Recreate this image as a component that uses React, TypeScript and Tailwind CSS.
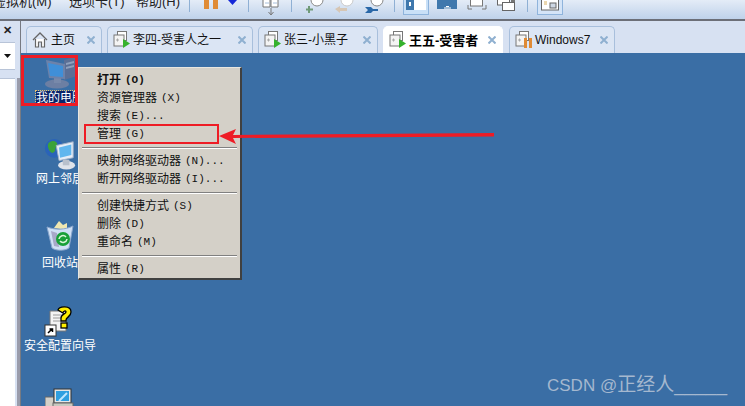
const cjk = "font-['Liberation_Sans','Noto_Sans_CJK_SC',sans-serif]";

function VmIcon({ paused }: { paused?: boolean }) {
  return (
    <svg width="18" height="18" viewBox="0 0 18 18" className="shrink-0">
      <rect x="4.500" y="0.500" width="9" height="9" fill="#fff" stroke="#777" />
      <rect x="1" y="4" width="10" height="11" fill="#f4f4f4" stroke="#777" strokeWidth="1" />
      <path d="M3 9h3M4.500 7.500v3" stroke="#a9a9a9" />
      {paused ? (
        <>
          <rect x="9" y="7" width="3" height="10" fill="#e08b35" />
          <rect x="14" y="7" width="3" height="10" fill="#e08b35" />
        </>
      ) : (
        <path d="M10 8l7 4.500-7 4.500z" fill="#35b22c" />
      )}
    </svg>
  );
}

function HomeIcon() {
  return (
    <svg width="16" height="16" viewBox="0 0 16 16" className="shrink-0">
      <path d="M1 8l7-7 7 7" fill="none" stroke="#666" strokeWidth="1.300" />
      <path d="M3.500 7v8h3v-5h3v5h3V7" fill="#fff" stroke="#666" strokeWidth="1.200" />
    </svg>
  );
}

function CloseX() {
  return (
    <svg width="8" height="8" viewBox="0 0 8 8" className="ml-auto mr-[6px] shrink-0">
      <path d="M0.500 0.500l7 7M7.500 0.500l-7 7" stroke="#8fb0d0" strokeWidth="2" />
    </svg>
  );
}

function Tab({ width, icon, label, active, gap }: { width: string; icon: React.ReactNode; label: string; active?: boolean; gap: string }) {
  return (
    <div
      className={`${width} ${gap} h-[27px] flex items-center pl-[5px] rounded-t-[5px] border border-b-0 ${
        active ? "bg-white border-white font-bold text-black" : "bg-[#dbe5f4] border-[#a8bfdc] text-[#111]"
      }`}
    >
      {icon}
      <span className={`${active ? "text-[13px]" : "text-[12px]"} whitespace-nowrap leading-none`}>{label}</span>
      <CloseX />
    </div>
  );
}

function MenuItem({ label, hint, bold }: { label: string; hint: string; bold?: boolean }) {
  return (
    <div className={`h-[18px] flex items-center gap-[4px] pl-[18px] text-[12px] leading-none text-[#111] whitespace-nowrap ${bold ? "font-bold" : ""}`}>
      <span>{label}</span>
      <span className="font-['Liberation_Mono',monospace] text-[11px]">{hint}</span>
    </div>
  );
}

function MenuSep() {
  return (
    <div className="h-[9px] flex flex-col justify-center px-[3px]">
      <div className="h-[1px] bg-[#808080]" />
      <div className="h-[1px] bg-white" />
    </div>
  );
}

function DesktopIcon({ pos, icon, label, selected, labelGap }: { pos: string; icon: React.ReactNode; label: string; selected?: boolean; labelGap: string }) {
  return (
    <div className={`absolute ${pos} w-[78px] flex flex-col items-center`}>
      {icon}
      <span
        className={`text-[12px] leading-[14px] text-white whitespace-nowrap ${labelGap} ${
          selected ? "bg-[#0a246a] outline-1 outline-dotted outline-[#e8c070]" : ""
        }`}
      >
        {label}
      </span>
    </div>
  );
}

function ComputerIcon() {
  return (
    <svg width="36" height="34" viewBox="0 0 36 34">
      <path d="M22 5l10-3 3 2v17l-13 4z" fill="#5b6f96" />
      <path d="M24 8l8-2v2l-8 2zM24 12l8-2v2l-8 2z" fill="#8fa0bd" />
      <ellipse cx="15" cy="29" rx="12" ry="4.500" fill="#6d7fa3" />
      <path d="M12 22h7v6h-7z" fill="#7889aa" />
      <path d="M4 5l19 4v15L7 23z" fill="#6c82aa" />
      <path d="M6 8l15 3v11L8 21z" fill="#3f8fd8" />
    </svg>
  );
}

function NetworkIcon() {
  return (
    <svg width="32" height="32" viewBox="0 0 34 34">
      <circle cx="11" cy="11" r="10" fill="#2a63b8" />
      <path d="M5 5c4-3 8-2 9 1s-2 3-2 6-3 5-5 3-4-7-2-10z" fill="#3ba23a" />
      <path d="M13 8l18-4v17l-15 3z" fill="#e5ecf6" stroke="#9fb0c8" />
      <path d="M16 10l13-3v11l-12 3z" fill="#60b6ee" />
      <ellipse cx="24" cy="29" rx="9" ry="4.500" fill="#dfe3ea" />
      <path d="M20 23h7v6h-7z" fill="#b8c0cc" />
    </svg>
  );
}

function RecycleIcon() {
  return (
    <svg width="30" height="32" viewBox="0 0 30 32">
      <path d="M9 8l5-7 4 4 4-2v7z" fill="#efe6b0" />
      <path d="M2 7c8 3 18 3 26-1l-4 22c-4 3-13 3-17 0z" fill="#cfe0f5" stroke="#8aa6cc" />
      <path d="M6 11l6 2 2 14-5-1z" fill="#a7a8c8" />
      <circle cx="18" cy="19" r="7" fill="#18a038" />
      <path d="M14 19a4 4 0 0 1 7-2M22 19a4 4 0 0 1-7 2" fill="none" stroke="#d8f5d8" strokeWidth="1.600" />
    </svg>
  );
}

function WizardIcon() {
  return (
    <svg width="32" height="32" viewBox="0 0 32 32">
      <path d="M6 6h14l2 2v18H6z" fill="#f4f4f4" stroke="#777" />
      <path d="M9 10h9M9 13h9M9 16h9" stroke="#9a9a9a" />
      <path d="M14 5c1-4 13-5 13 2 0 5-5 5-5 8v1h-5v-3c0-4 5-4 5-6 0-2-3-1-3 1z" fill="#ffee00" stroke="#000" strokeWidth="1.300" />
      <rect x="17" y="18" width="6" height="5" fill="#ffee00" stroke="#000" strokeWidth="1.300" />
      <rect x="1" y="20" width="11" height="11" fill="#fff" stroke="#333" />
      <path d="M4 28l4-4M5.500 24H8.500V27" stroke="#000" strokeWidth="1.500" fill="none" />
    </svg>
  );
}

function ConsoleIcon() {
  return (
    <svg width="30" height="20" viewBox="0 0 30 20">
      <rect x="0" y="9" width="9" height="11" fill="#d4d0c8" stroke="#666" />
      <rect x="9" y="1" width="17" height="14" fill="#e5e5e5" stroke="#333" />
      <rect x="11" y="3" width="13" height="10" fill="#2f9fe0" />
      <path d="M14 13l8-8" stroke="#bfe6ff" strokeWidth="2" />
      <rect x="8" y="15" width="20" height="5" fill="#c9c9c0" stroke="#666" />
    </svg>
  );
}

function ToolSep({ ml }: { ml: string }) {
  return <div className={`w-[1px] h-[12px] bg-[#8fb0d4] shrink-0 ${ml}`} />;
}

export default function App() {
  return (
    <div className={`${cjk} w-[745px] h-[406px] overflow-hidden flex flex-col bg-[#d7e1f2]`}>
      {/* top menu + toolbar, cropped by the screenshot */}
      <div className="h-[19px] shrink-0 flex items-start overflow-hidden bg-gradient-to-b from-[#e4ecf7] to-[#bfd2ea]">
        <div className="flex -mt-[6px] text-[13px] leading-[16px] text-[#222] whitespace-nowrap">
          <span className="-ml-[7px] w-[76px]">虚拟机(M)</span>
          <span className="w-[67px]">选项卡(T)</span>
          <span className="w-[53px]">帮助(H)</span>
        </div>
        <ToolSep ml="ml-0" />
        <div className="flex items-start ml-[14px]">
          <div className="w-[5px] h-[9px] bg-[#e08b35]" />
          <div className="w-[5px] h-[9px] bg-[#e08b35] ml-[4px]" />
          <svg width="9" height="5" viewBox="0 0 9 5" className="ml-[10px]"><path d="M0 0h9L4.500 5z" fill="#1528d8" /></svg>
        </div>
        <ToolSep ml="ml-[11px]" />
        <svg width="18" height="16" viewBox="0 0 18 16" className="ml-[13px]">
          <path d="M1 0v7h7V0M9 0v7h7V0" fill="#fff" stroke="#777" />
          <path d="M3 3h4M11 3h4" stroke="#a8c0dc" />
          <path d="M9 8v6M6.500 12L9 15l2.500-3" fill="none" stroke="#777" />
        </svg>
        <ToolSep ml="ml-[11px]" />
        <svg width="20" height="13" viewBox="0 0 20 13" className="ml-[12px]">
          <path d="M7 0a6 6 0 0 0 12 0" fill="#fff" stroke="#888" />
          <path d="M5 6v7M2 9.500h7" stroke="#6f9a78" strokeWidth="2" />
        </svg>
        <svg width="20" height="13" viewBox="0 0 20 13" className="ml-[10px]">
          <path d="M7 0a6 6 0 0 0 12 0" fill="#fff" stroke="#c9c9c9" />
          <path d="M1 9l5-3v2h7v3H6v2z" fill="#d6c6b4" />
        </svg>
        <svg width="20" height="13" viewBox="0 0 20 13" className="ml-[10px]">
          <path d="M7 0a6 6 0 0 0 12 0" fill="#fff" stroke="#888" />
          <path d="M1 7h6l2 2h5v2H9l-2 2H1l3-3z" fill="#2a68a8" />
        </svg>
        <ToolSep ml="ml-[10px]" />
        <div className="ml-[8px] w-[26px] h-[15px] shrink-0 border border-t-0 border-[#8fb4dc] bg-[#c9e0f7] flex justify-center">
          <svg width="20" height="10" viewBox="0 0 20 10">
            <rect width="20" height="10" fill="#fff" />
            <rect width="8" height="10" fill="#3f78ad" />
            <rect x="3" y="2" width="2" height="4" fill="#fff" />
          </svg>
        </div>
        <svg width="20" height="10" viewBox="0 0 20 10" className="ml-[8px]">
          <rect width="20" height="9" fill="#3f78ad" />
          <path d="M7 8h7M9 6.500h3" stroke="#fff" />
        </svg>
        <svg width="20" height="10" viewBox="0 0 20 10" className="ml-[10px]">
          <rect x="3.500" y="-1" width="12" height="7" fill="#fff" stroke="#777" />
          <path d="M1 5v4h4M19 5v4h-4" fill="none" stroke="#777" />
        </svg>
        <svg width="20" height="11" viewBox="0 0 20 11" className="ml-[10px]">
          <rect x="0.500" y="-1" width="12" height="6" fill="#fff" stroke="#666" />
          <rect x="5.500" y="2.500" width="12" height="8" fill="#fff" stroke="#666" />
          <rect x="14" y="0" width="4" height="2" fill="#777" />
        </svg>
        <ToolSep ml="ml-[10px]" />
        <div className="ml-[9px] w-[26px] h-[15px] shrink-0 border border-t-0 border-[#8fb4dc] bg-[#d4e4f7] flex justify-center">
          <svg width="18" height="11" viewBox="0 0 18 11">
            <rect x="0.500" y="-1" width="17" height="11" fill="#fff" stroke="#666" />
            <path d="M3 2h3M3 4h3" stroke="#d8b060" />
            <rect x="9" y="3" width="6" height="5" fill="#cfd8e4" stroke="#666" />
          </svg>
        </div>
      </div>
      <div className="h-[2px] shrink-0 bg-[#6c6f78]" />

      <div className="flex-1 flex min-h-0">
        {/* collapsed library panel */}
        <div className="w-[15px] shrink-0 flex flex-col">
          <div className="h-[19px] flex items-center justify-center text-[11px] font-bold text-[#222] leading-none">✕</div>
          <div className="h-[28px] bg-white mt-[2px] border-y border-[#b8c4d8] flex items-center justify-center">
            <svg width="7" height="4" viewBox="0 0 7 4"><path d="M0 0h7L3.500 4z" fill="#111" /></svg>
          </div>
          <div className="flex-1 bg-white mt-[8px] border-t border-[#b8c4d8]" />
        </div>
        {/* gutter: lavender up top, gray beside the desktop */}
        <div className="w-[5px] shrink-0 flex flex-col">
          <div className="h-[57px] shrink-0" />
          <div className="flex-1 ml-[2px] bg-[#9a9cab]" />
        </div>
        <div className="w-[1px] shrink-0 bg-[#777a82]" />

        <div className="flex-1 flex flex-col min-w-0">
          {/* VM tabs */}
          <div className="h-[32px] shrink-0 flex items-end pl-[5px] gap-[5px] bg-[#d7e1f2]">
            <Tab width="w-[76px]" gap="gap-[3px]" icon={<HomeIcon />} label="主页" />
            <Tab width="w-[146px]" gap="gap-[2px]" icon={<VmIcon />} label="李四-受害人之一" />
            <Tab width="w-[120px]" gap="gap-[2px]" icon={<VmIcon />} label="张三-小黑子" />
            <Tab width="w-[120px]" gap="gap-[2px]" active icon={<VmIcon />} label="王五-受害者" />
            <div className="ml-[1px]">
              <Tab width="w-[106px]" gap="gap-[2px]" icon={<VmIcon paused />} label="Windows7" />
            </div>
          </div>

          {/* guest desktop */}
          <div className="flex-1 relative bg-[#3a6ea5] overflow-hidden">
            <DesktopIcon pos="left-0 top-[2px]" labelGap="mt-[2px]" selected icon={<ComputerIcon />} label="我的电脑" />
            <DesktopIcon pos="left-0 top-[85px]" labelGap="mt-[2px]" icon={<NetworkIcon />} label="网上邻居" />
            <DesktopIcon pos="left-0 top-[167px]" labelGap="mt-[4px]" icon={<RecycleIcon />} label="回收站" />
            <DesktopIcon pos="left-0 top-[252px]" labelGap="mt-[2px]" icon={<WizardIcon />} label="安全配置向导" />
            <div className="absolute left-[24px] top-[335px]"><ConsoleIcon /></div>

            {/* context menu */}
            <div className="absolute left-[57px] top-[14px] w-[164px] h-[213px] bg-[#d4d0c8] border-t border-l border-[#e8e6e0] border-r-2 border-b-2 border-r-[#404040] border-b-[#404040] pt-[3px]">
              <MenuItem bold label="打开" hint="(O)" />
              <MenuItem label="资源管理器" hint="(X)" />
              <MenuItem label="搜索" hint="(E)..." />
              <MenuItem label="管理" hint="(G)" />
              <MenuSep />
              <MenuItem label="映射网络驱动器" hint="(N)..." />
              <MenuItem label="断开网络驱动器" hint="(I)..." />
              <MenuSep />
              <MenuItem label="创建快捷方式" hint="(S)" />
              <MenuItem label="删除" hint="(D)" />
              <MenuItem label="重命名" hint="(M)" />
              <MenuSep />
              <MenuItem label="属性" hint="(R)" />
            </div>

            {/* red annotations */}
            <div className="absolute left-0 top-[2px] w-[57px] h-[51px] border-[3px] border-[#ee1c25]" />
            <div className="absolute left-[63px] top-[71px] w-[135px] h-[20px] border-2 border-[#ee1c25]" />
            <svg width="290" height="20" viewBox="0 0 290 20" className="absolute left-[195px] top-[73px]">
              <path d="M3 10L20 3l-3 6 261-2v3.500L17 12l3 6z" fill="#ee1c25" />
            </svg>

            <div className="absolute left-[526px] top-[321px] text-[17px] leading-[22px] text-[#a5b8cf] whitespace-nowrap">
              CSDN @<span className="text-[19px]">正经人_____</span>
            </div>
          </div>
        </div>
      </div>
    </div>
  );
}
